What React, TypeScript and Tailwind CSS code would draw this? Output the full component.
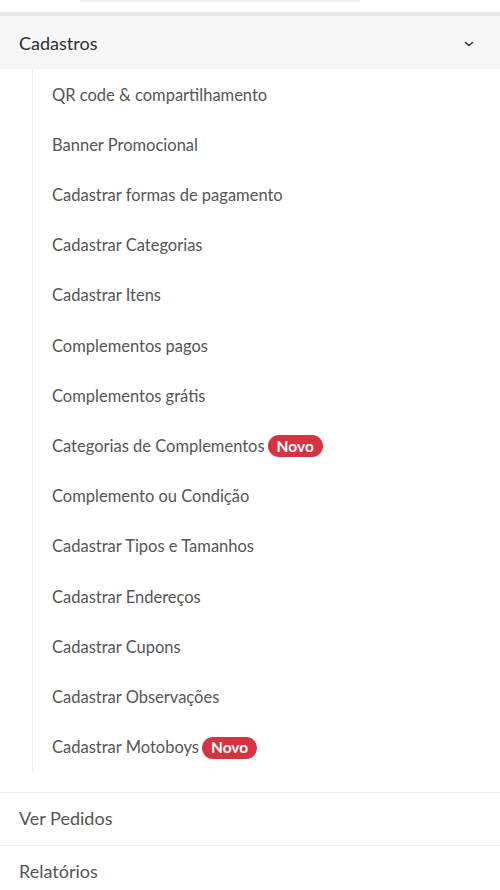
import React from "react";

const items: { label: string; novo?: boolean }[] = [
  { label: "QR code & compartilhamento" },
  { label: "Banner Promocional" },
  { label: "Cadastrar formas de pagamento" },
  { label: "Cadastrar Categorias" },
  { label: "Cadastrar Itens" },
  { label: "Complementos pagos" },
  { label: "Complementos grátis" },
  { label: "Categorias de Complementos", novo: true },
  { label: "Complemento ou Condição" },
  { label: "Cadastrar Tipos e Tamanhos" },
  { label: "Cadastrar Endereços" },
  { label: "Cadastrar Cupons" },
  { label: "Cadastrar Observações" },
  { label: "Cadastrar Motoboys", novo: true },
];

const Badge = () => (
  <span className="ml-[3px] inline-flex h-[22px] items-center rounded-full bg-[#d7323f] px-[9px] text-[15.5px] font-bold text-white">
    Novo
  </span>
);

export default function App() {
  return (
    <div className="w-[500px] h-[890px] overflow-hidden bg-white font-['Lato','Open_Sans',sans-serif]">
      {/* top search bar remnant */}
      <div className="h-[12px] bg-white flex justify-center">
        <div className="w-[280px] h-[2px] bg-[#f0f0f0] -ml-[60px]" />
      </div>
      <div className="h-[4px] bg-[#e6e6e6]" />

      {/* Cadastros header */}
      <div className="h-[53px] bg-[#f6f6f6] flex items-center justify-between pl-[19px] pr-[26px] pt-[2px]">
        <span className="text-[18px] text-[#2e2e2e]">Cadastros</span>
        <svg width="10" height="6" viewBox="0 0 10 6" fill="none">
          <path d="M1.5 1.5L5 4.5L8.5 1.5" stroke="#333" strokeWidth="1.6" strokeLinecap="round" strokeLinejoin="round" />
        </svg>
      </div>

      {/* submenu */}
      <div className="ml-[32px] border-l border-[#ececec] pt-[1px]">
        {items.map((it) => (
          <div key={it.label} className="h-[50.2px] flex items-center pl-[19px] text-[16.5px] text-[#555]">
            <span>{it.label}</span>
            {it.novo && <Badge />}
          </div>
        ))}
      </div>

      <div className="h-[19px]" />
      <div className="border-t border-[#ededed] h-[53px] flex items-center pl-[19px] text-[18px] text-[#555]">
        Ver Pedidos
      </div>
      <div className="border-t border-[#ededed] h-[53px] flex items-center pl-[19px] text-[18px] text-[#555]">
        Relatórios
      </div>
    </div>
  );
}
